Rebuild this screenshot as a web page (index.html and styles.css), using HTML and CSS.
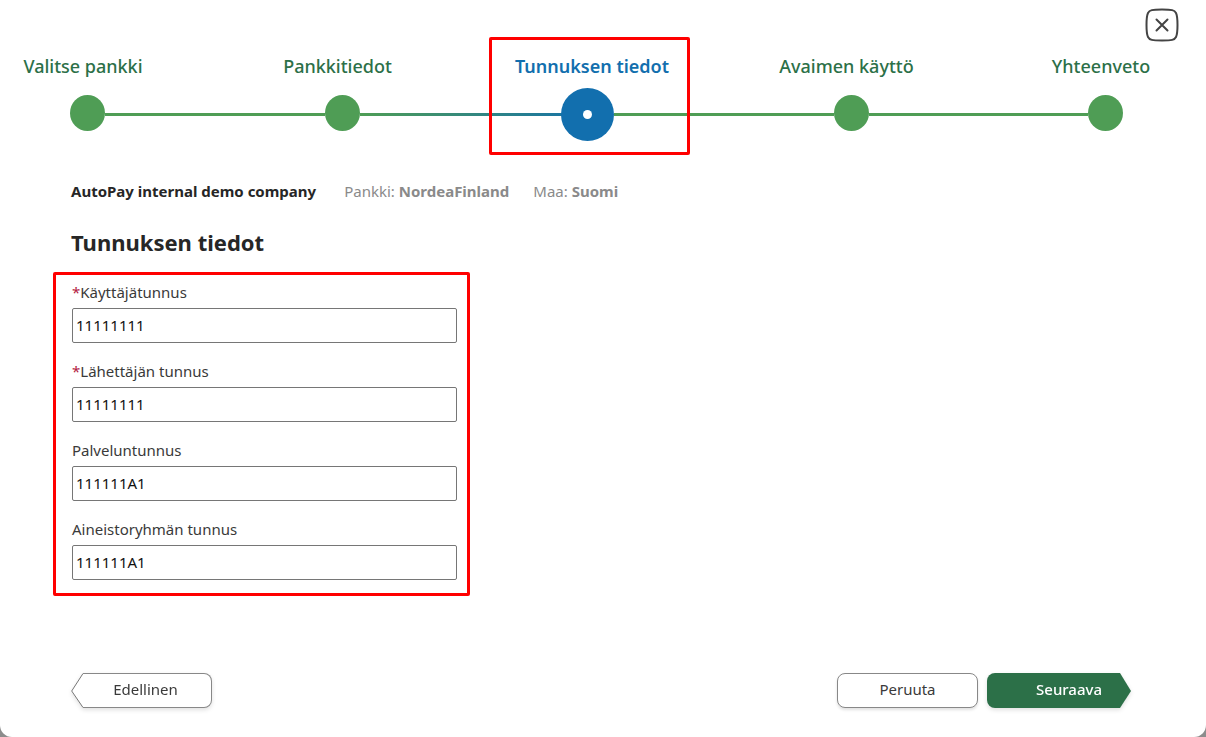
FILE: index.html
```html
<!DOCTYPE html>
<html lang="fi">
<head>
<meta charset="utf-8">
<meta name="viewport" content="width=device-width, initial-scale=1">
<title>Tunnuksen tiedot</title>
<link rel="stylesheet" href="styles.css">
</head>
<body>
<main class="dialog">
  <header class="dialog-top">
    <button class="close" type="button" aria-label="Sulje">
      <svg width="34" height="34" viewBox="0 0 34 34" fill="none" stroke="#444" stroke-width="2" stroke-linecap="round">
        <path d="M17 1.500C27 1.500 29.500 2 31 5C33 9 33 25 31 29C29.500 32 27 32.500 17 32.500C7 32.500 4.500 32 3 29C1 25 1 9 3 5C4.500 2 7 1.500 17 1.500Z"/>
        <path d="M11.500 11.500L22.500 22.500M22.500 11.500L11.500 22.500"/>
      </svg>
    </button>
  </header>
  <nav class="stepper" aria-label="Vaiheet">
    <ol class="steps">
      <li class="step">Valitse pankki</li>
      <li class="step">Pankkitiedot</li>
      <li class="step step-active" aria-current="step">Tunnuksen tiedot</li>
      <li class="step">Avaimen käyttö</li>
      <li class="step">Yhteenveto</li>
    </ol>
    <div class="track" aria-hidden="true">
      <span class="dot"></span><span class="line"></span>
      <span class="dot"></span><span class="line line-active"></span>
      <span class="dot-active"></span><span class="line"></span>
      <span class="dot"></span><span class="line"></span>
      <span class="dot"></span>
    </div>
  </nav>
  <form class="content">
    <div class="meta">
      <strong class="company">AutoPay internal demo company</strong>
      <span>Pankki: <b>NordeaFinland</b></span>
      <span>Maa: <b>Suomi</b></span>
    </div>
    <h1 class="title">Tunnuksen tiedot</h1>
    <div class="fields">
      <div class="field"><label for="user"><span class="required">*</span>Käyttäjätunnus</label><input id="user" type="text" value="11111111" required></div>
      <div class="field"><label for="sender"><span class="required">*</span>Lähettäjän tunnus</label><input id="sender" type="text" value="11111111" required></div>
      <div class="field"><label for="service">Palveluntunnus</label><input id="service" type="text" value="111111A1"></div>
      <div class="field"><label for="group">Aineistoryhmän tunnus</label><input id="group" type="text" value="111111A1"></div>
    </div>
    <footer class="actions">
      <button class="btn-back" type="button">
        <svg width="12" height="35" viewBox="0 0 12 35"><path d="M12 0.500L0.700 18L12 34.500" fill="#fff" stroke="#777"/></svg>
        <span class="back-body">Edellinen</span>
      </button>
      <div class="actions-end">
        <button class="btn-cancel" type="button">Peruuta</button>
        <button class="btn-next" type="submit"><span>Seuraava</span></button>
      </div>
    </footer>
  </form>
</main>
</body>
</html>
```
FILE: styles.css
```css
* { box-sizing: border-box; }
body {
  margin: 0;
  background: #8c8c8c;
  color: #262626;
  font: 15px/22px "Noto Sans", "Open Sans", sans-serif;
}
button, input { font: inherit; color: inherit; }
.dialog {
  display: flex;
  flex-direction: column;
  min-height: 100vh;
  background: #fff;
  border-radius: 0 0 12px 12px;
}
.dialog-top {
  display: flex;
  justify-content: flex-end;
  padding: 8px 27px 0 0;
}
.close {
  display: flex;
  padding: 0;
  border: 0;
  background: none;
  cursor: pointer;
}
.steps {
  display: flex;
  justify-content: space-between;
  margin: 0;
  padding: 12px 25px 0 3px;
  list-style: none;
}
.step {
  width: 160px;
  color: #2c7048;
  font-size: 18px;
  line-height: 24px;
  font-weight: 500;
  text-align: center;
  white-space: nowrap;
}
.step-active {
  position: relative;
  color: #126fae;
  font-weight: 600;
}
.step-active::after {
  content: "";
  position: absolute;
  top: -17px;
  left: -23px;
  box-sizing: border-box;
  width: 201px;
  height: 118px;
  border: 3px solid #f00;
  border-radius: 2px;
  z-index: 2;
}
.track {
  display: flex;
  align-items: center;
  padding: 10px 83px 0 70px;
}
.dot {
  width: 35px;
  height: 36px;
  margin-bottom: 3px;
  border-radius: 50%;
  background: #4f9d55;
}
.line {
  flex: 1;
  height: 3px;
  background: #4f9d55;
}
.line-active { background: linear-gradient(90deg, #4f9d55, #126fae 110%); }
.dot-active {
  display: flex;
  align-items: center;
  justify-content: center;
  width: 53px;
  height: 53px;
  margin-left: -18px;
  border-radius: 50%;
  background: #126fae;
  z-index: 1;
}
.dot-active::before {
  content: "";
  width: 9px;
  height: 9px;
  border-radius: 50%;
  background: #fff;
}
.content {
  display: flex;
  flex: 1;
  flex-direction: column;
  padding: 39px 75px 29px 71px;
}
.meta {
  display: flex;
  gap: 24px;
  color: #8a8a8a;
}
.company {
  margin-right: 4px;
  color: #262626;
}
.title {
  margin: 24px 0 14px;
  font-size: 22px;
  line-height: 32px;
}
.fields {
  display: flex;
  flex-direction: column;
  gap: 17px;
  width: 100%;
  max-width: 417px;
  margin: 0 0 24px -18px;
  padding: 6px 10px 13px 16px;
  border: 3px solid #f00;
  border-radius: 2px;
}
.field {
  display: flex;
  flex-direction: column;
  gap: 5px;
  color: #3a3a3a;
}
.required { color: #b3213f; }
.field input {
  height: 35px;
  padding: 0 3px 2px;
  border: 1px solid #767676;
  border-radius: 2px;
  background: #fff;
  color: #111;
}
.actions {
  display: flex;
  justify-content: space-between;
  margin-top: auto;
}
.actions-end {
  display: flex;
  gap: 9px;
}
.btn-back, .btn-cancel, .btn-next {
  height: 35px;
  color: #3a3a3a;
  cursor: pointer;
}
.btn-back {
  display: flex;
  width: 141px;
  padding: 0;
  border: 0;
  background: none;
  filter: drop-shadow(0 2px 2px rgba(0, 0, 0, .12));
}
.back-body {
  flex: 1;
  height: 35px;
  padding-right: 3px;
  border: 1px solid #888;
  border-left: 0;
  border-radius: 0 8px 8px 0;
  background: #fff;
  line-height: 31px;
}
.btn-cancel {
  width: 141px;
  padding: 0 0 3px;
  border: 1px solid #888;
  border-radius: 8px;
  background: #fff;
  box-shadow: 0 2px 3px rgba(0, 0, 0, .12);
}
.btn-next {
  width: 144px;
  padding: 0;
  border: 0;
  background: none;
  color: #fff;
  font-weight: 500;
  filter: drop-shadow(0 2px 2px rgba(0, 0, 0, .12));
}
.btn-next span {
  display: block;
  height: 35px;
  padding-left: 20px;
  border-radius: 8px 0 0 8px;
  background: #2c7048;
  line-height: 33px;
  clip-path: polygon(0 0, 133px 0, 100% 18px, 133px 100%, 0 100%);
}
```
